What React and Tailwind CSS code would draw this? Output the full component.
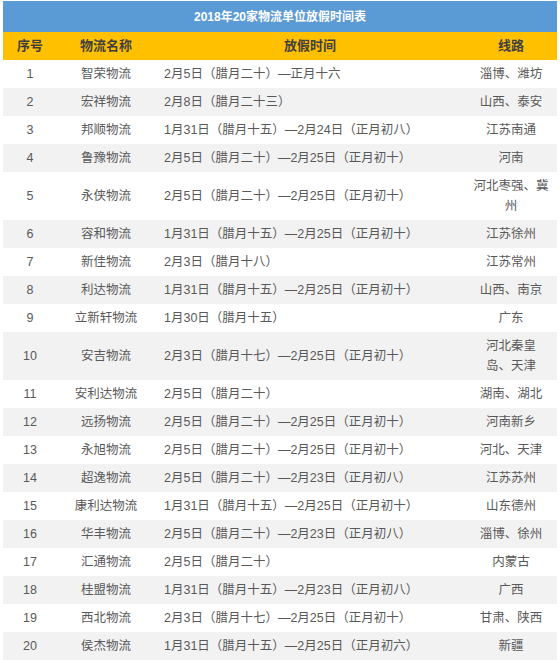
import React from 'react';

const rows = [
    ['1', '智荣物流', '2月5日（腊月二十）—正月十六', ['淄博、潍坊']],
    ['2', '宏祥物流', '2月8日（腊月二十三）', ['山西、泰安']],
    ['3', '邦顺物流', '1月31日（腊月十五）—2月24日（正月初八）', ['江苏南通']],
    ['4', '鲁豫物流', '2月5日（腊月二十）—2月25日（正月初十）', ['河南']],
    ['5', '永侠物流', '2月5日（腊月二十）—2月25日（正月初十）', ['河北枣强、冀', '州']],
    ['6', '容和物流', '1月31日（腊月十五）—2月25日（正月初十）', ['江苏徐州']],
    ['7', '新佳物流', '2月3日（腊月十八）', ['江苏常州']],
    ['8', '利达物流', '1月31日（腊月十五）—2月25日（正月初十）', ['山西、南京']],
    ['9', '立新轩物流', '1月30日（腊月十五）', ['广东']],
    ['10', '安吉物流', '2月3日（腊月十七）—2月25日（正月初十）', ['河北秦皇', '岛、天津']],
    ['11', '安利达物流', '2月5日（腊月二十）', ['湖南、湖北']],
    ['12', '远扬物流', '2月5日（腊月二十）—2月25日（正月初十）', ['河南新乡']],
    ['13', '永旭物流', '2月5日（腊月二十）—2月25日（正月初十）', ['河北、天津']],
    ['14', '超逸物流', '2月5日（腊月二十）—2月23日（正月初八）', ['江苏苏州']],
    ['15', '康利达物流', '1月31日（腊月十五）—2月25日（正月初十）', ['山东德州']],
    ['16', '华丰物流', '2月5日（腊月二十）—2月23日（正月初八）', ['淄博、徐州']],
    ['17', '汇通物流', '2月5日（腊月二十）', ['内蒙古']],
    ['18', '桂盟物流', '1月31日（腊月十五）—2月23日（正月初八）', ['广西']],
    ['19', '西北物流', '2月3日（腊月十七）—2月25日（正月初十）', ['甘肃、陕西']],
    ['20', '侯杰物流', '1月31日（腊月十五）—2月25日（正月初六）', ['新疆']],
];

export default function App() {
    return (
        <div className="w-[560px] h-[662px] overflow-hidden bg-white pt-px px-[3px] font-['Liberation_Sans','Noto_Sans_CJK_SC',sans-serif]">
            <table className="w-[554px] table-fixed border-collapse">
                <colgroup>
                    <col className="w-[54px]" />
                    <col className="w-[98px]" />
                    <col className="w-[310px]" />
                    <col className="w-[92px]" />
                </colgroup>
                <thead>
                    <tr className="bg-[#5b9bd5]">
                        <th colSpan={4} className="h-[31px] text-center text-[12px] font-bold text-white">
                            2018年20家物流单位放假时间表
                        </th>
                    </tr>
                    <tr className="bg-[#ffc000] text-[13px] font-bold text-[#3f3f3f]">
                        <th className="h-[28px] text-center">序号</th>
                        <th className="text-center">物流名称</th>
                        <th className="text-center">放假时间</th>
                        <th className="text-center">线路</th>
                    </tr>
                </thead>
                <tbody className="text-[12.5px] leading-5 text-[#595959]">
                    {rows.map(([no, name, time, route]) => (
                        <tr key={no} className={Number(no) % 2 === 0 ? 'bg-[#f2f2f2]' : 'bg-white'}>
                            <td className="h-[28px] py-1 text-center">{no}</td>
                            <td className="py-1 text-center whitespace-nowrap">{name}</td>
                            <td className="py-1 pl-[9px] whitespace-nowrap">{time}</td>
                            <td className="py-1 text-center whitespace-nowrap">
                                {route.map((line, i) => (
                                    <div key={i}>{line}</div>
                                ))}
                            </td>
                        </tr>
                    ))}
                </tbody>
            </table>
        </div>
    );
}
